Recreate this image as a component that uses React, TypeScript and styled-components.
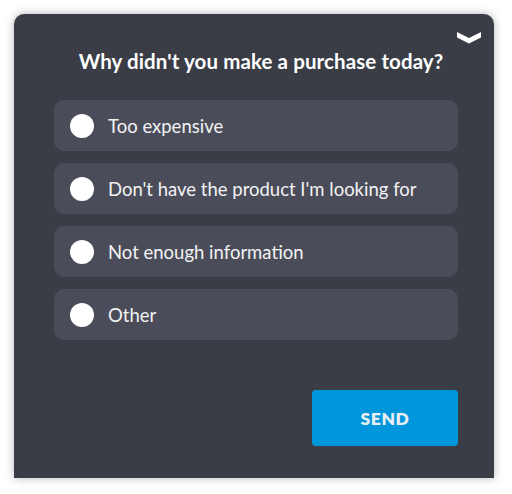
import React, { useState } from 'react';
import styled, { createGlobalStyle } from 'styled-components';

const GlobalStyle = createGlobalStyle`
  html, body {
    margin: 0;
    padding: 0;
    background: #ffffff;
  }
  body {
    font-family: Lato, "Open Sans", sans-serif;
  }
`;

const Page = styled.div`
  width: 512px;
  height: 494px;
  padding: 14px 18px 0 14px;
  box-sizing: border-box;
  overflow: hidden;
`;

const Panel = styled.div`
  position: relative;
  width: 480px;
  height: 464px;
  box-sizing: border-box;
  background: #3a3d46;
  border-radius: 10px 10px 0 0;
  box-shadow: 0 0 8px rgba(40, 44, 60, 0.35);
  padding: 35px 36px 0 40px;
  display: flex;
  flex-direction: column;
`;

const Collapse = styled.button`
  position: absolute;
  top: 16px;
  right: 12px;
  width: 26px;
  height: 16px;
  padding: 0;
  border: none;
  background: none;
  cursor: pointer;
`;

const Title = styled.h2`
  margin: 0 0 27px;
  padding-left: 10px;
  color: #ffffff;
  font-size: 20.5px;
  line-height: 24px;
  font-weight: 700;
  text-align: center;
  letter-spacing: 0.1px;
`;

const Options = styled.div`
  display: flex;
  flex-direction: column;
  gap: 12px;
`;

const Option = styled.label`
  display: flex;
  align-items: center;
  height: 51px;
  padding: 0 16px;
  gap: 14px;
  background: #4a4d59;
  border-radius: 10px;
  color: #f2f2f4;
  font-size: 18.5px;
  cursor: pointer;
`;

const Dot = styled.span<{ $checked: boolean }>`
  width: 24px;
  height: 24px;
  border-radius: 50%;
  background: #ffffff;
  flex-shrink: 0;
  box-sizing: border-box;
  border: ${(p) => (p.$checked ? '7px solid #0096db' : 'none')};
`;

const Footer = styled.div`
  display: flex;
  justify-content: flex-end;
  margin-top: 50px;
`;

const SendButton = styled.button`
  width: 146px;
  height: 56px;
  border: none;
  border-radius: 4px;
  background: #0096db;
  color: #e8eef3;
  font-family: Lato, "Open Sans", sans-serif;
  font-size: 17.5px;
  font-weight: 800;
  letter-spacing: 0.6px;
  cursor: pointer;
`;

const reasons = [
  'Too expensive',
  "Don't have the product I'm looking for",
  'Not enough information',
  'Other',
];

export default function App() {
  const [picked, setPicked] = useState<number | null>(null);
  return (
    <>
      <GlobalStyle />
      <Page>
        <Panel>
          <Collapse aria-label="Collapse">
            <svg width="26" height="16" viewBox="0 0 26 16">
              <path d="M1 2 L13 8 L25 2 L25 7.5 L13 13.5 L1 7.5 Z" fill="#ffffff" />
            </svg>
          </Collapse>
          <Title>Why didn't you make a purchase today?</Title>
          <Options>
            {reasons.map((r, i) => (
              <Option key={r} onClick={() => setPicked(i)}>
                <Dot $checked={picked === i} />
                {r}
              </Option>
            ))}
          </Options>
          <Footer>
            <SendButton>SEND</SendButton>
          </Footer>
        </Panel>
      </Page>
    </>
  );
}
